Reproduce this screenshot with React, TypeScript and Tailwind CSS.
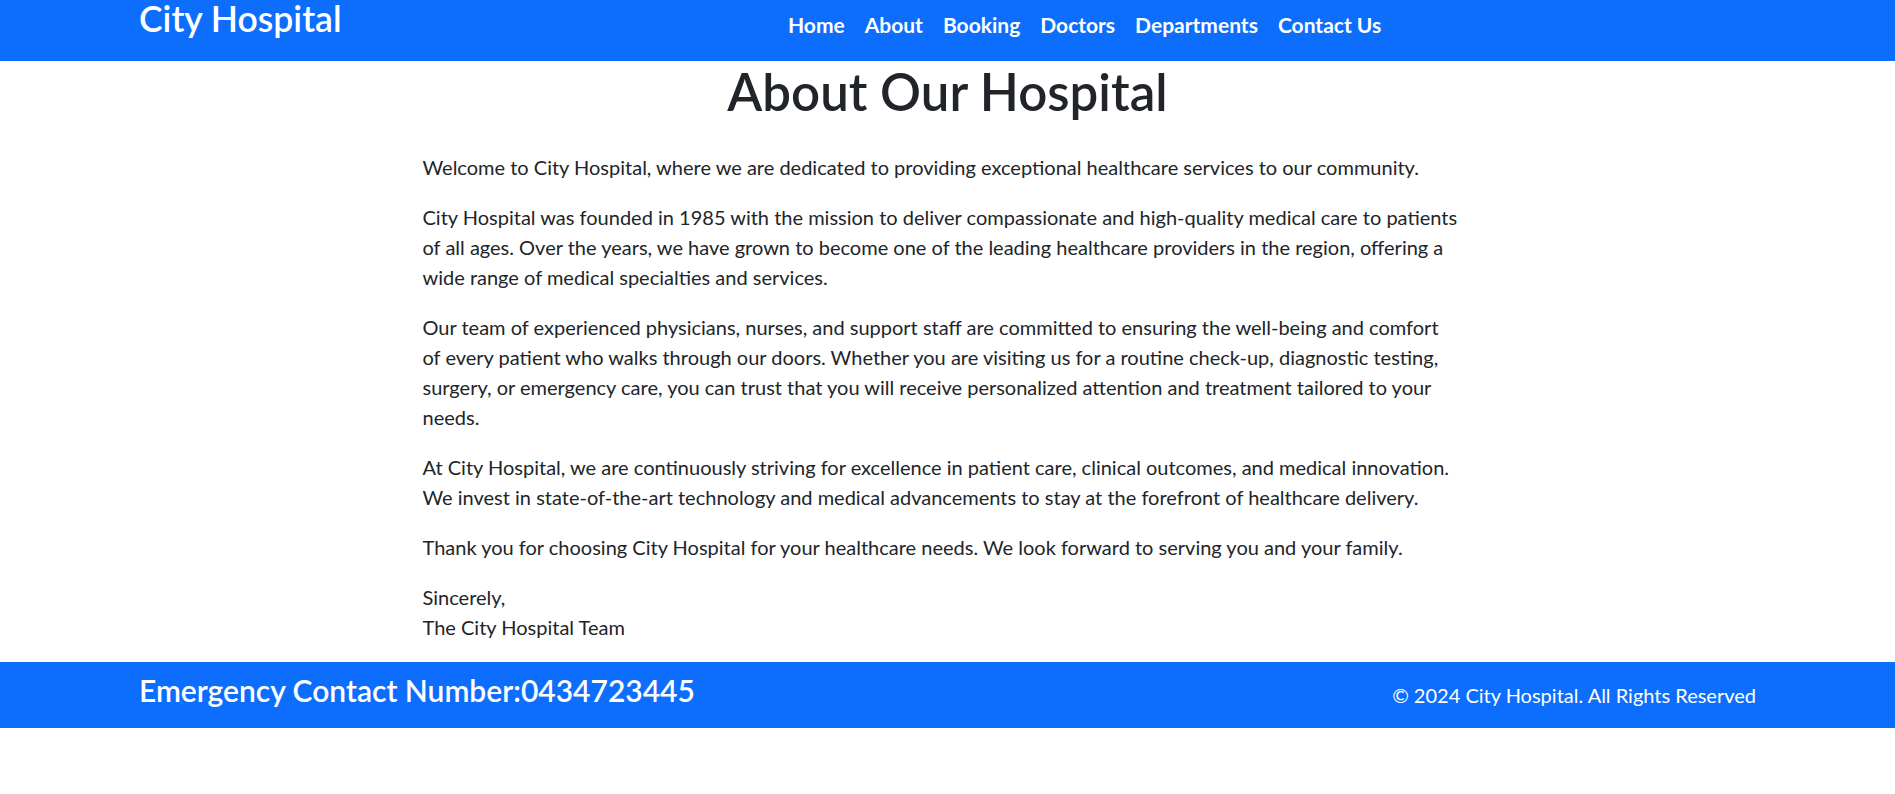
import React from "react";

const navLinks = ["Home", "About", "Booking", "Doctors", "Departments", "Contact Us"];

const paragraphs = [
  "Welcome to City Hospital, where we are dedicated to providing exceptional healthcare services to our community.",
  "City Hospital was founded in 1985 with the mission to deliver compassionate and high-quality medical care to patients of all ages. Over the years, we have grown to become one of the leading healthcare providers in the region, offering a wide range of medical specialties and services.",
  "Our team of experienced physicians, nurses, and support staff are committed to ensuring the well-being and comfort of every patient who walks through our doors. Whether you are visiting us for a routine check-up, diagnostic testing, surgery, or emergency care, you can trust that you will receive personalized attention and treatment tailored to your needs.",
  "At City Hospital, we are continuously striving for excellence in patient care, clinical outcomes, and medical innovation. We invest in state-of-the-art technology and medical advancements to stay at the forefront of healthcare delivery.",
  "Thank you for choosing City Hospital for your healthcare needs. We look forward to serving you and your family.",
];

const App = () => {
  return (
    <div className="min-h-screen bg-white font-['Segoe_UI','Lato','Liberation_Sans',sans-serif] text-[#212529]">
      {/* header */}
      <header className="h-[61px] bg-[#0d6efd] px-[139px] flex items-start">
        <div className="w-[649px] shrink-0">
          <h2 className="text-[35.5px] leading-[38px] font-semibold text-white">City Hospital</h2>
        </div>
        <nav className="flex flex-row gap-5 pt-[13px]">
          {navLinks.map((link) => (
            <a key={link} href="#" className="text-[21px] leading-[24px] font-bold text-white">
              {link}
            </a>
          ))}
        </nav>
      </header>

      {/* about */}
      <main className="flex flex-col items-center">
        <h1 className="text-[51px] leading-[62px] font-semibold text-center mb-[29px]">About Our Hospital</h1>
        <div className="w-[1050px] pr-[14px] text-[20px] leading-[30px]">
          {paragraphs.map((p, i) => (
            <p key={i} className="mb-5">
              {p}
            </p>
          ))}
          <p className="mb-5">
            Sincerely,
            <br />
            The City Hospital Team
          </p>
        </div>
      </main>

      {/* footer */}
      <footer className="h-[66px] bg-[#0d6efd] px-[139px] flex flex-row justify-between items-start text-white">
        <h3 className="pt-[10px] text-[30px] leading-[36px] font-semibold">Emergency Contact Number:0434723445</h3>
        <p className="pt-[18px] text-[20px] leading-[30px]">© 2024 City Hospital. All Rights Reserved</p>
      </footer>
    </div>
  );
};

export default App;
